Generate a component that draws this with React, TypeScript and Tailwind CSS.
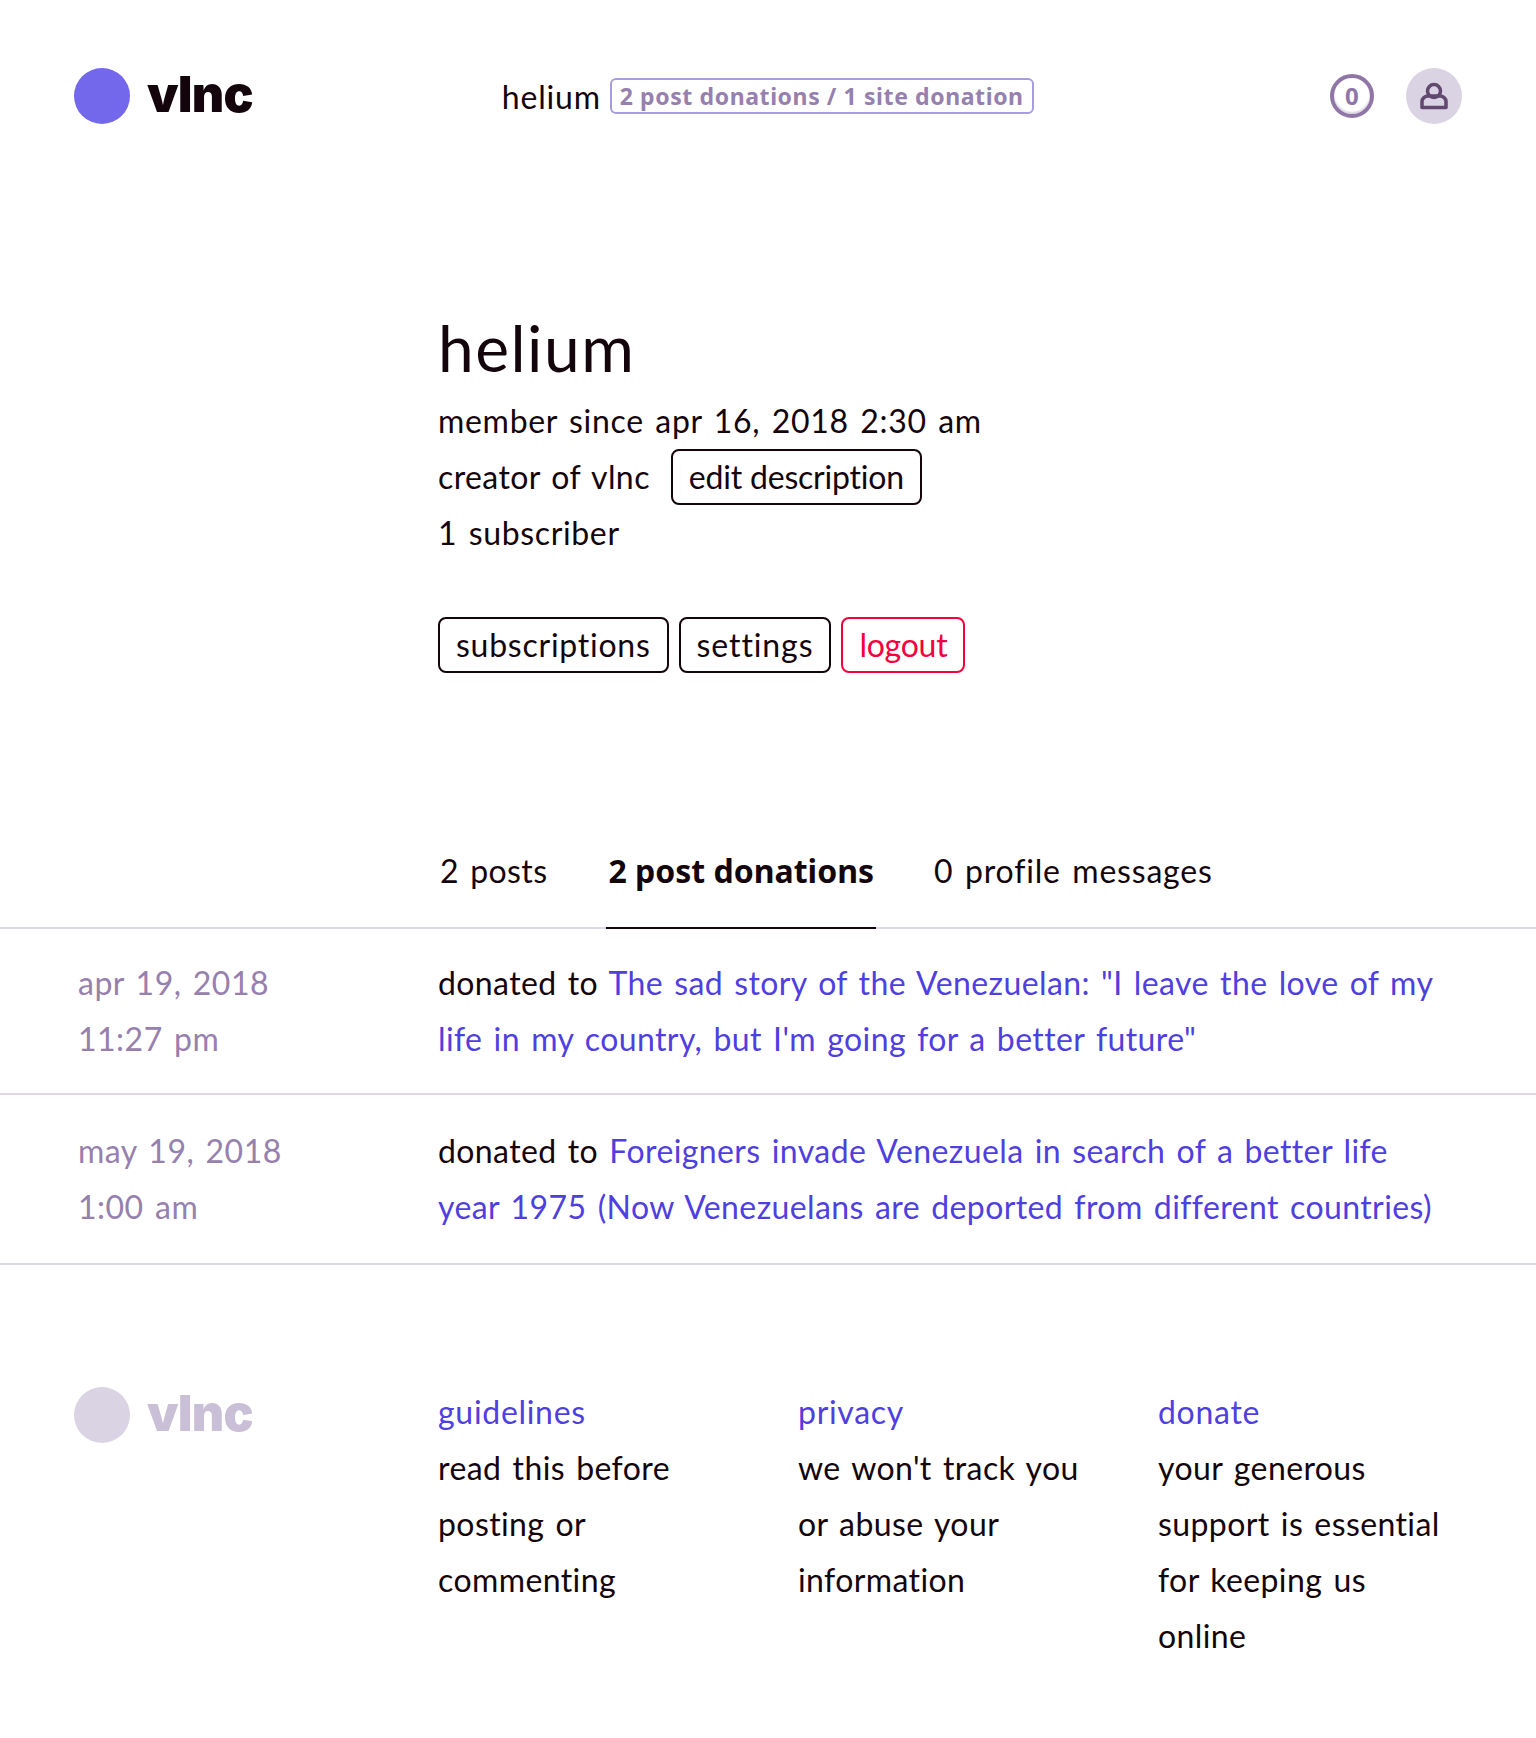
import React from 'react';

const Logo = ({ muted, className = '' }: { muted?: boolean; className?: string }) => (
  <div className={`flex h-14 ${className}`}>
    <div className={`w-14 h-14 rounded-full ${muted ? 'bg-[#dad3e3]' : 'bg-[#7367ec]'}`} />
    <span
      className={`ml-[17px] h-[52px] text-[50px] font-black leading-[52px] tracking-[-0.8px] [word-spacing:0] font-['Inter',sans-serif] ${
        muted ? 'text-[#c9bfd6]' : 'text-[#14050c]'
      }`}
    >
      vlnc
    </span>
  </div>
);

const Button = ({ label, danger, className = '' }: { label: string; danger?: boolean; className?: string }) => (
  <button
    className={`h-14 px-4 border-2 rounded-lg bg-white leading-[52px] ${className} ${
      danger ? 'border-[#f5003c] text-[#f5003c]' : 'border-[#14050c] text-[#14050c]'
    }`}
  >
    {label}
  </button>
);

const posts = [
  {
    date: 'apr 19, 2018',
    time: '11:27 pm',
    pad: 'py-[26px]',
    title: 'The sad story of the Venezuelan: "I leave the love of my life in my country, but I\'m going for a better future"',
  },
  {
    date: 'may 19, 2018',
    time: '1:00 am',
    pad: 'py-[28px]',
    title: 'Foreigners invade Venezuela in search of a better life year 1975 (Now Venezuelans are deported from different countries)',
  },
];

const footerLinks = [
  { title: 'guidelines', text: 'read this before posting or commenting' },
  { title: 'privacy', text: "we won't track you or abuse your information" },
  { title: 'donate', text: 'your generous support is essential for keeping us online' },
];

export default function App() {
  return (
    <div className="min-h-[1738px] bg-white text-[#14050c] text-[32px] leading-14 tracking-[0.4px] [word-spacing:2.6px] font-['Lato',sans-serif]">
      {/* header */}
      <header className="flex items-center justify-between h-[124px] pl-[74px] pr-[74px] pt-[68px]">
        <Logo />
        <div className="flex items-center mr-auto pl-[249px]">
          <span className="tracking-[0.8px] pt-[2px]">helium</span>
          <span className="ml-[9px] px-2 border-2 border-[#a99be0] rounded-md text-[23px] leading-8 font-bold tracking-[0.6px] [word-spacing:0] text-[#9680ae] font-['Noto_Sans',sans-serif]">
            2 post donations / 1 site donation
          </span>
        </div>
        <div className="flex items-center gap-[32px]">
          <div className="w-11 h-11 rounded-full border-4 border-[#8f76a6] shadow-[inset_0_-2px_2px_#dad3e3] flex items-center justify-center text-[24px] font-bold text-[#8f76a6] font-['Noto_Sans',sans-serif]">
            0
          </div>
          <div className="w-14 h-14 rounded-full bg-[#dad3e3] flex items-center justify-center">
            <svg width="30" height="28" viewBox="0 0 30 28" fill="none" stroke="#62476f" strokeWidth="3.5">
              <circle cx="15" cy="9" r="6.5" />
              <path d="M3 25.5v-6c0-3 3-5.5 6-5.5h12c3 0 6 2.5 6 5.5v6z" strokeLinejoin="round" />
            </svg>
          </div>
        </div>
      </header>

      {/* profile */}
      <section className="pl-[438px] pt-[179px]">
        <h1 className="text-[64px] leading-[90px] tracking-[1.5px]">helium</h1>
        <div className="tracking-[0.7px]">member since apr 16, 2018 2:30 am</div>
        <div className="flex items-center">
          <span>creator of vlnc</span>
          <span className="ml-[21px]">
            <Button label="edit description" className="tracking-[-0.2px] [word-spacing:0]" />
          </span>
        </div>
        <div className="tracking-[0.65px]">1 subscriber</div>
        <div className="flex gap-2.5 mt-14">
          <Button label="subscriptions" className="tracking-[0.75px]" />
          <Button label="settings" className="tracking-[0.9px]" />
          <Button label="logout" danger className="tracking-[-0.25px]" />
        </div>
      </section>

      {/* tabs */}
      <nav className="flex pl-[438px] mt-[170px] border-b-2 border-[#ddd8e3] h-[86px]">
        <div className="px-0.5 mr-[57px]">2 posts</div>
        <div className="px-0.5 mr-[56px] font-bold tracking-normal [word-spacing:0] border-b-2 border-[#14050c] h-[86px] font-['Noto_Sans',sans-serif]">
          2 post donations
        </div>
        <div className="px-0.5 tracking-[0.8px]">0 profile messages</div>
      </nav>

      {/* rows */}
      {posts.map((post) => (
        <div key={post.date} className={`grid grid-cols-[360px_1fr] pl-[78px] pr-[90px] border-b-2 border-[#ddd8e3] ${post.pad}`}>
          <div className="text-[#9680ae] tracking-[0.5px]">
            <div>{post.date}</div>
            <div>{post.time}</div>
          </div>
          <div>
            donated to <a className="text-[#4f3fe0]">{post.title}</a>
          </div>
        </div>
      ))}

      {/* footer */}
      <footer className="grid grid-cols-[364px_360px_360px_1fr] items-start pl-[74px] pr-[74px] pt-[119px]">
        <Logo muted className="mt-[3px]" />
        {footerLinks.map((col) => (
          <div key={col.title}>
            <a className="block text-[#4f3fe0] tracking-[0.7px]">{col.title}</a>
            <p className="max-w-[300px]">{col.text}</p>
          </div>
        ))}
      </footer>
    </div>
  );
}
